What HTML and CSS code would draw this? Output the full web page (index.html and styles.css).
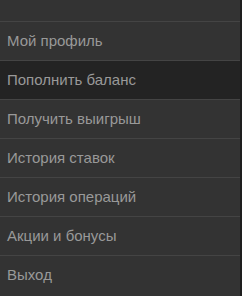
FILE: index.html
```html
<!DOCTYPE html>
<html lang="ru">

<head>
    <meta charset="UTF-8">
    <title>Меню</title>
    <link rel="stylesheet" href="styles.css">
</head>

<body>
    <div class="side-menu">
        <div class="menu-top"></div>
        <ul class="menu-list">
            <li><a href="#">Мой профиль</a></li>
            <li class="active"><a href="#">Пополнить баланс</a></li>
            <li><a href="#">Получить выигрыш</a></li>
            <li><a href="#">История ставок</a></li>
            <li><a href="#">История операций</a></li>
            <li><a href="#">Акции и бонусы</a></li>
            <li><a href="#">Выход</a></li>
        </ul>
    </div>
</body>

</html>
```

FILE: styles.css
```css
html,
body,
div,
ul,
li,
a {
    padding: 0;
    margin: 0;
}

html,
body {
    height: 100%;
    background: #1e1e1e;
}

body {
    font-family: "Liberation Sans", Arial, sans-serif;
}

li {
    list-style: none;
}

.side-menu {
    width: 240px;
    min-height: 100%;
    background: #333;
}

.menu-top {
    height: 21px;
}

.menu-list li {
    border-top: 1px solid #444;
}

.menu-list li a {
    display: block;
    height: 38px;
    line-height: 38px;
    padding-left: 7px;
    font-size: 15px;
    color: #999;
    text-decoration: none;
}

.menu-list li.active {
    background: #232323;
}
```
